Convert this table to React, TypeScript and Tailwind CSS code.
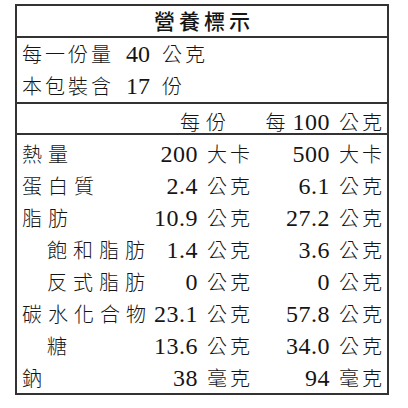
const cjk = "font-['Noto_Sans_CJK_TC','Noto_Sans_CJK_SC',sans-serif]";
const num = "font-['Liberation_Serif','Times_New_Roman',serif]";

type Row = { label: string; indent?: boolean; per: string; per100: string; unit: string };

const rows: Row[] = [
  { label: "熱量", per: "200", per100: "500", unit: "大卡" },
  { label: "蛋白質", per: "2.4", per100: "6.1", unit: "公克" },
  { label: "脂肪", per: "10.9", per100: "27.2", unit: "公克" },
  { label: "飽和脂肪", indent: true, per: "1.4", per100: "3.6", unit: "公克" },
  { label: "反式脂肪", indent: true, per: "0", per100: "0", unit: "公克" },
  { label: "碳水化合物", per: "23.1", per100: "57.8", unit: "公克" },
  { label: "糖", indent: true, per: "13.6", per100: "34.0", unit: "公克" },
  { label: "鈉", per: "38", per100: "94", unit: "毫克" },
];

function Amount({ value, unit }: { value: string; unit: string }) {
  return (
    <span className="flex items-baseline justify-end">
      <span className={`${num} text-[24px] tracking-[0.5px]`}>{value}</span>
      <span className={`${cjk} ml-[9px] text-[20px] font-light tracking-[3px]`}>{unit}</span>
    </span>
  );
}

export default function App() {
  return (
    <div className="w-[408px] h-[408px] bg-white pt-[4px] pl-[15px] text-[#151515]">
      <div className="w-[374px] border-2 border-[#333]">
        <div className="h-[32px] flex items-center justify-center border-b-2 border-[#333]">
          <span className={`${cjk} text-[21px] font-medium tracking-[4px] pl-[4px]`}>營養標示</span>
        </div>

        <div className="flex flex-col pl-[5px] border-b-2 border-[#333]">
          <div className="h-[32px] flex items-center">
            <span className={`${cjk} text-[20px] font-light tracking-[3px]`}>每一份量</span>
            <span className={`${num} text-[24px] ml-[12px]`}>40</span>
            <span className={`${cjk} text-[20px] font-light tracking-[3px] ml-[12px]`}>公克</span>
          </div>
          <div className="h-[32px] flex items-center">
            <span className={`${cjk} text-[20px] font-light tracking-[3px]`}>本包裝含</span>
            <span className={`${num} text-[24px] ml-[12px]`}>17</span>
            <span className={`${cjk} text-[20px] font-light ml-[12px]`}>份</span>
          </div>
        </div>

        <div className="h-[31px] grid grid-cols-[133px_107px_1fr] items-center border-b-2 border-[#333]">
          <div />
          <div className="flex justify-end pr-[25px]">
            <span className={`${cjk} text-[20px] font-light tracking-[6px]`}>每份</span>
          </div>
          <div className="flex justify-end items-baseline pr-[2px]">
            <span className={`${cjk} text-[20px] font-light`}>每</span>
            <span className={`${num} text-[24px] tracking-[0.5px] ml-[7px]`}>100</span>
            <span className={`${cjk} ml-[9px] text-[20px] font-light tracking-[3px]`}>公克</span>
          </div>
        </div>

        <div className="flex flex-col py-[1px]">
          {rows.map((r) => (
            <div key={r.label} className="h-[32px] grid grid-cols-[133px_107px_1fr] items-center">
              <span
                className={`${cjk} text-[20px] font-light whitespace-nowrap tracking-[6px] ${r.indent ? "pl-[30px]" : "pl-[5px]"}`}
              >
                {r.label}
              </span>
              <div className="pr-[4px]">
                <Amount value={r.per} unit={r.unit} />
              </div>
              <div className="pr-[2px]">
                <Amount value={r.per100} unit={r.unit} />
              </div>
            </div>
          ))}
        </div>
      </div>
    </div>
  );
}
